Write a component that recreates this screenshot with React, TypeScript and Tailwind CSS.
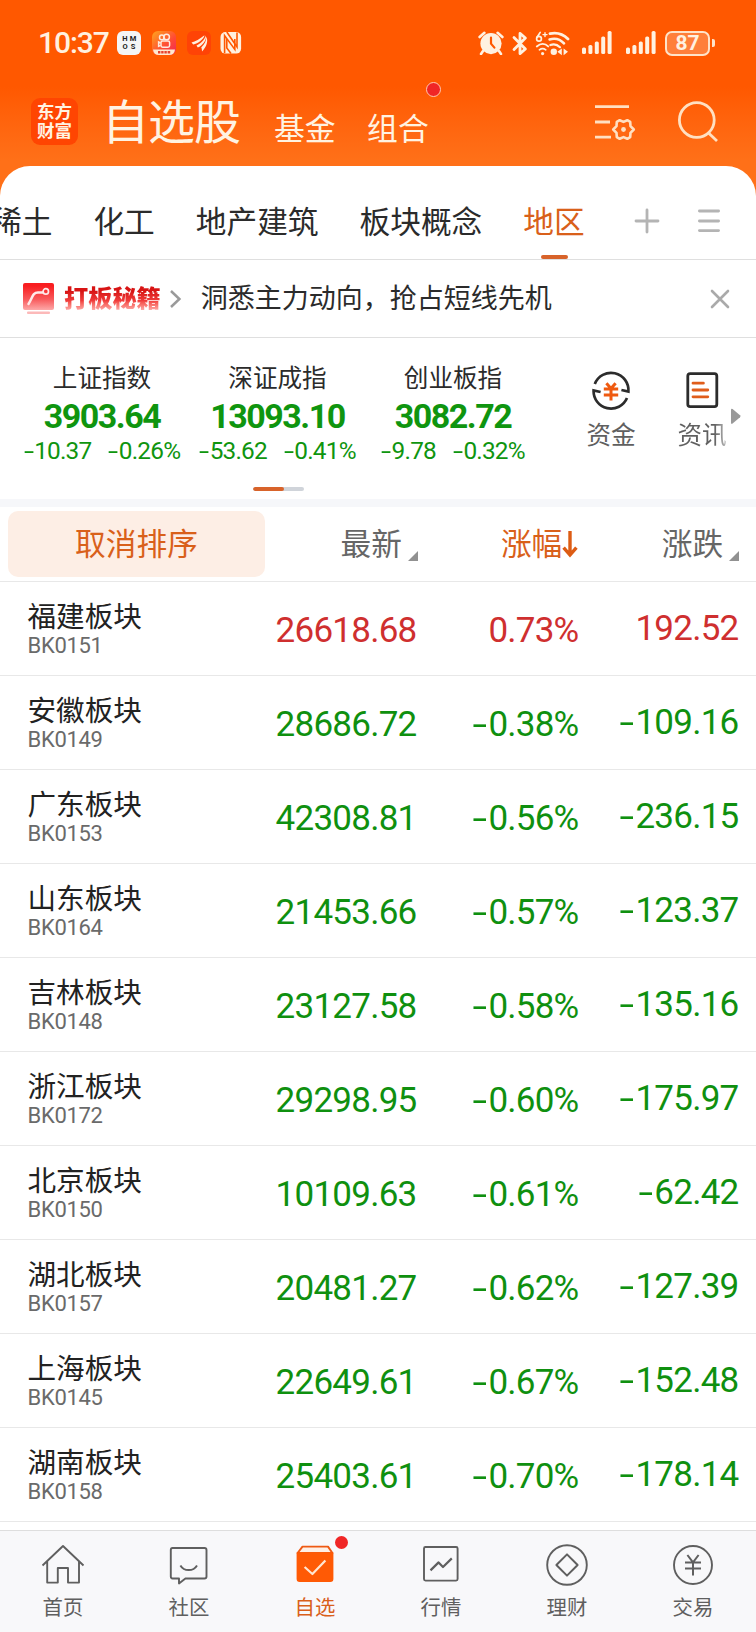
import React from "react";

type Quote = { name: string; code: string; price: string; pct: string; diff: string };

const quotes: Quote[] = [
  { name: "福建板块", code: "BK0151", price: "26618.68", pct: "0.73%", diff: "192.52" },
  { name: "安徽板块", code: "BK0149", price: "28686.72", pct: "-0.38%", diff: "-109.16" },
  { name: "广东板块", code: "BK0153", price: "42308.81", pct: "-0.56%", diff: "-236.15" },
  { name: "山东板块", code: "BK0164", price: "21453.66", pct: "-0.57%", diff: "-123.37" },
  { name: "吉林板块", code: "BK0148", price: "23127.58", pct: "-0.58%", diff: "-135.16" },
  { name: "浙江板块", code: "BK0172", price: "29298.95", pct: "-0.60%", diff: "-175.97" },
  { name: "北京板块", code: "BK0150", price: "10109.63", pct: "-0.61%", diff: "-62.42" },
  { name: "湖北板块", code: "BK0157", price: "20481.27", pct: "-0.62%", diff: "-127.39" },
  { name: "上海板块", code: "BK0145", price: "22649.61", pct: "-0.67%", diff: "-152.48" },
  { name: "湖南板块", code: "BK0158", price: "25403.61", pct: "-0.70%", diff: "-178.14" },
];

const indices = [
  { name: "上证指数", value: "3903.64", diff: "-10.37", pct: "-0.26%", box: "w-[176px]" },
  { name: "深证成指", value: "13093.10", diff: "-53.62", pct: "-0.41%", box: "w-[175px]" },
  { name: "创业板指", value: "3082.72", diff: "-9.78", pct: "-0.32%", box: "w-[176px]" },
];

function Signed({ text }: { text: string }) {
  if (!text.startsWith("-")) return <>{text}</>;
  return (
    <>
      <span className="mr-[0.06em] inline-block origin-right scale-x-[1.5]">-</span>
      {text.slice(1)}
    </>
  );
}

function SignalBars() {
  return (
    <svg width="30" height="24" viewBox="0 0 30 24" fill="#fff1e0">
      <rect x="0" y="16.5" width="4" height="6.5" rx="1.6" />
      <rect x="6.4" y="14" width="4" height="9" rx="1.6" />
      <rect x="12.8" y="10.5" width="4" height="12.5" rx="1.6" />
      <rect x="19.2" y="5.5" width="4" height="17.5" rx="1.6" />
      <rect x="25.6" y="0" width="4" height="23" rx="1.6" />
    </svg>
  );
}

function StatusBar() {
  return (
    <div className="flex h-[86px] items-center pl-[38px] text-[#fff1e0]">
      <span className="w-[79px] text-[30px] font-medium leading-[30px] tracking-[-1.1px]">10:37</span>
      <div className="grid h-6 w-6 grid-cols-2 place-items-center rounded-[6px] bg-[#f4f5f6] px-[4px] py-[4px] text-[7.5px] font-bold leading-[8px] text-[#222]">
        <span>H</span>
        <span>M</span>
        <span>O</span>
        <span>S</span>
      </div>
      <svg className="ml-[11px]" width="24" height="24" viewBox="0 0 24 24">
        <defs>
          <linearGradient id="video" x1="0" y1="0" x2="1" y2="1">
            <stop offset="0" stopColor="#ffa51e" />
            <stop offset="0.6" stopColor="#ff4a35" />
            <stop offset="1" stopColor="#f0255a" />
          </linearGradient>
        </defs>
        <rect width="24" height="24" rx="6" fill="url(#video)" />
        <g fill="none" stroke="#ffe9dd" strokeWidth="1.5">
          <circle cx="9.8" cy="6.4" r="2.3" />
          <circle cx="14.6" cy="6" r="2.8" />
          <rect x="9" y="10" width="8.6" height="6.2" rx="1.6" />
          <path d="M8.6 12 L6.6 11 v4.4 L8.6 14.4" />
        </g>
        <path d="M1 18.5 H23 Q22.4 24 17 24 H7 Q1.6 24 1 18.5Z" fill="#ffe8cf" />
        <path d="M6 21.2 H19" stroke="#e8402c" strokeWidth="2.6" strokeDasharray="2.4 0.8" />
      </svg>
      <svg className="ml-[11px]" width="24" height="24" viewBox="0 0 24 24">
        <rect width="24" height="24" rx="6" fill="#ff4306" />
        <g fill="#fff1e0">
          <path d="M4.5 11.5 C8 10.5 13 8 17.5 4.2 C17 8 11 12.5 6.2 13.6 Z" />
          <path d="M9.5 14.4 C13.5 13 17.5 9 18.8 4.6 C20 9 15.5 14.8 10.8 16.6 Z" />
          <path d="M14.2 16.6 C17.6 13.5 19.4 9.5 19.4 5.8 C21.4 10 19.6 16 15 20.4 C15 18.8 14.8 17.6 14.2 16.6Z" />
        </g>
      </svg>
      <svg className="ml-[9px]" width="22" height="24" viewBox="0 0 22 24">
        <rect x="0.5" y="1" width="20.6" height="21.6" rx="5" fill="#fff1e0" />
        <path d="M4.6 22 V4.6 L14.8 18.4 V8" fill="none" stroke="#ff5800" strokeWidth="1.6" />
        <path d="M6.8 1 L17 16 V1.6 M6.8 8 V17 L11 22.6" fill="none" stroke="#ff5800" strokeWidth="1.6" />
      </svg>
      <svg className="ml-[235.5px]" width="26" height="24" viewBox="0 0 26 24">
        <circle cx="13" cy="12.6" r="10.6" fill="#fff1e0" />
        <path d="M1.6 6 L6.4 1.8 M24.4 6 L19.6 1.8 M5 20 L3 23 M21 20 L23 23" stroke="#fff1e0" strokeWidth="2.6" strokeLinecap="round" />
        <path d="M13 6.6 V12.6 L16.4 16.6" fill="none" stroke="#ff5800" strokeWidth="2.2" strokeLinecap="round" />
      </svg>
      <svg className="ml-[8px]" width="16" height="25" viewBox="0 0 16 25">
        <path d="M2 6.5 L13.4 18 L8 22.6 V2.4 L13.4 7 L2 18.5" fill="none" stroke="#fff1e0" strokeWidth="2.8" strokeLinejoin="round" strokeLinecap="round" />
      </svg>
      <svg className="ml-[7px]" width="36" height="25" viewBox="0 0 36 25">
        <g fill="none" stroke="#fff1e0" strokeLinecap="round">
          <path d="M5.2 1.4 L2.2 6" strokeWidth="1.7" />
          <circle cx="4" cy="7.8" r="2.4" strokeWidth="1.7" />
          <path d="M8 3.6 H12 M10 1.6 V5.6" strokeWidth="1.4" />
          <path d="M15 2.6 C22 1 28 3 33 8" strokeWidth="2.8" />
          <path d="M14.6 8.4 C20 6.8 25.4 8.4 29 12.4" strokeWidth="2.6" />
          <path d="M1.8 15.4 C5.6 12.2 10 12.2 13.2 15.4" strokeWidth="1.9" />
          <path d="M4.4 18.8 C6.4 17.2 8.8 17.2 10.8 18.8" strokeWidth="1.7" />
          <path d="M15.4 14 C19 12.6 22.4 13.6 25 16.2" strokeWidth="2.2" />
        </g>
        <circle cx="7.6" cy="22.6" r="1.6" fill="#fff1e0" />
        <circle cx="18.8" cy="20.8" r="3.2" fill="#fff1e0" />
        <path d="M22.4 20.8 L26.8 17.4 V24.2Z M33 20.8 L28.6 17.4 V24.2Z" fill="#fff1e0" />
      </svg>
      <div className="ml-[11px] flex gap-[14px]">
        <SignalBars />
        <SignalBars />
      </div>
      <div className="ml-[9.5px] flex items-center gap-[2px]">
        <div className="flex h-[25px] w-[45px] items-center justify-center rounded-[7px] border-2 border-[#ffe3c8] bg-[#ff7f3a] text-[21px] font-bold leading-[21px]">
          87
        </div>
        <div className="h-2 w-[3px] rounded-r-[2px] bg-[#ffe3c8]" />
      </div>
    </div>
  );
}

function TitleBar() {
  return (
    <div className="flex h-20 items-start pl-[31px] text-[#fff3e2]">
      <div className="mt-3 flex h-[47px] w-[47px] flex-col items-center justify-center rounded-[9px] bg-[#ff4502] text-[17.5px] font-bold leading-[19px]">
        <span>东方</span>
        <span>财富</span>
      </div>
      <span className="ml-[24px] mt-[12px] w-[140px] text-[47px] leading-[50px] tracking-[-1px]">自选股</span>
      <span className="ml-[32px] mt-[24px] text-[30.8px] leading-[40px]">基金</span>
      <span className="relative ml-[31.5px] mt-[24px] text-[30.8px] leading-[40px]">
        组合
        <i className="absolute -right-[12px] -top-[28px] h-[15px] w-[15px] rounded-full border border-[#ffc9b4] bg-[#f02626]" />
      </span>
      <svg className="ml-[165px] mt-[18px]" width="42" height="38" viewBox="0 0 42 38" fill="none" stroke="#ffe0c2">
        <path d="M1 2.7 H35 M1 18 H16 M1 33.2 H17" strokeWidth="2.8" />
        <path
          d="M25.7 16.2 L29.5 17.9 L33.3 16.2 L36.2 17.9 L36.5 22.1 L39.8 25.5 L36.5 28.9 L36.2 33.1 L33.3 34.8 L29.5 33.1 L25.7 34.8 L22.8 33.1 L22.5 28.9 L19.2 25.5 L22.5 22.1 L22.8 17.9 Z"
          strokeWidth="2.6"
          strokeLinejoin="round"
        />
        <circle cx="29.5" cy="25.5" r="2.4" fill="#ffe0c2" stroke="none" />
      </svg>
      <svg className="ml-[42px] mt-[15px]" width="42" height="42" viewBox="0 0 42 42" fill="none" stroke="#ffe0c2" strokeWidth="2.8">
        <circle cx="18.8" cy="19" r="17.4" />
        <path d="M30 31.5 L39 40" />
      </svg>
    </div>
  );
}

function Tabs() {
  return (
    <div className="flex h-[94px] items-start border-b border-[#dfdfdf] pt-[36.5px] text-[30.7px] leading-[40px] text-[#2b2b2b]">
      <div className="-ml-[9px] flex shrink-0 gap-[41px] whitespace-nowrap">
        <span>稀土</span>
        <span>化工</span>
        <span>地产建筑</span>
        <span>板块概念</span>
        <div className="flex h-[56.5px] flex-col items-center justify-between text-[#d9601a]">
          <span>地区</span>
          <i className="h-1 w-[27px] rounded-full bg-[#d8632a]" />
        </div>
      </div>
      <svg className="ml-[49px] mt-[5.5px]" width="26" height="26" viewBox="0 0 26 26" stroke="#b4b4b4" strokeWidth="2.8" strokeLinecap="round">
        <path d="M2 13 H24 M13 2 V24" />
      </svg>
      <svg className="ml-[37px] mt-[5.5px]" width="24" height="26" viewBox="0 0 24 26" stroke="#b4b4b4" strokeWidth="2.8" strokeLinecap="round">
        <path d="M2.4 3 H21.6 M2.4 13 H21.6 M2.4 22.6 H21.6" />
      </svg>
    </div>
  );
}

function Promo() {
  return (
    <div className="flex h-[78px] items-center border-b border-[#dfdfdf] pl-[22px]">
      <svg width="33" height="34" viewBox="0 0 33 34">
        <defs>
          <linearGradient id="promo" x1="0" y1="0" x2="0" y2="1">
            <stop offset="0.1" stopColor="#f91d20" />
            <stop offset="0.6" stopColor="#f8595b" />
            <stop offset="1" stopColor="#fda9a9" />
          </linearGradient>
        </defs>
        <rect x="1" y="1" width="31" height="27" rx="2" fill="url(#promo)" />
        <rect x="5" y="29.5" width="23" height="2.6" rx="1" fill="#fcb9b9" />
        <path d="M6.5 22 C10.5 16 10.5 10.4 16 10.4 H21" fill="none" stroke="#ffe9e9" strokeWidth="2.5" strokeLinecap="round" />
        <circle cx="23.8" cy="9.4" r="2.7" fill="none" stroke="#ffe9e9" strokeWidth="1.7" />
      </svg>
      <span className="ml-[9px] bg-linear-to-b from-[#d81414] from-25% via-[#f03a3a] via-55% to-[#fdb0b0] to-90% bg-clip-text text-[24.2px] font-black leading-[30px] text-transparent">
        打板秘籍
      </span>
      <svg className="ml-[8px]" width="14" height="20" viewBox="0 0 14 20" fill="none" stroke="#9a9a9a" strokeWidth="2.5">
        <path d="M2 2 L10.4 10 L2 18" />
      </svg>
      <span className="ml-[18px] w-[510px] text-[27px] leading-[36px] text-[#2b2b2b]">洞悉主力动向，抢占短线先机</span>
      <svg className="-ml-[1px]" width="20" height="20" viewBox="0 0 20 20" stroke="#aaa" strokeWidth="2.6" strokeLinecap="round">
        <path d="M2 2 L18 18 M18 2 L2 18" />
      </svg>
    </div>
  );
}

function Indices() {
  return (
    <div className="flex h-[161px] pl-[14px] text-[#0f950f]">
      <div className="w-[527px]">
        <div className="flex h-[149px]">
          {indices.map((i) => (
            <div key={i.name} className={`flex flex-col items-center pt-[24px] ${i.box}`}>
              <span className="text-[24.6px] leading-[34px] text-[#2b2b2b]">{i.name}</span>
              <span className="mt-[2px] text-[34px] font-bold leading-[36px] tracking-[-1.5px]">{i.value}</span>
              <span className="ml-[3px] mt-[3px] flex gap-[20px] whitespace-nowrap text-[24.4px] leading-[28px] tracking-[-0.8px]">
                <span>
                  <Signed text={i.diff} />
                </span>
                <span>
                  <Signed text={i.pct} />
                </span>
              </span>
            </div>
          ))}
        </div>
        <div className="ml-[239px] h-1 w-[51px] overflow-hidden rounded-full bg-[#d0d4da]">
          <div className="h-1 w-[31px] rounded-full bg-[#d8632a]" />
        </div>
      </div>
      <div className="flex pt-[32px] text-[24.6px] leading-[30px] text-[#606060]">
        <div className="ml-[39px] flex w-[62px] flex-col items-center">
          <svg width="40" height="40" viewBox="0 0 40 40" fill="none" stroke="#2c2c2c" strokeWidth="2.7">
            <path d="M3.8 14 A17.4 17.4 0 0 1 37.4 21.6 L30.4 20" />
            <path d="M36 28 A17.4 17.4 0 0 1 2.6 20.4 L9.6 22" />
            <path d="M15.4 13.2 L20 18.4 L24.6 13.2 M12.8 19 H27.2 M12.8 25 H27.2 M20 18 V30.4" stroke="#ef5a10" strokeWidth="3" />
          </svg>
          <span className="mt-[11px]">资金</span>
        </div>
        <div className="ml-[29px] flex w-[62px] flex-col items-center">
          <svg width="40" height="40" viewBox="0 0 40 40" fill="none" stroke="#2c2c2c" strokeWidth="2.8">
            <rect x="5.8" y="3.6" width="29" height="33" rx="2.4" />
            <path d="M11 13.2 H21.4 M11 20 H25.8 M11 26.8 H25.8" stroke="#e05d1b" strokeWidth="2.8" strokeLinecap="round" />
          </svg>
          <span className="mt-[11px] bg-linear-to-r from-[#606060] from-75% to-[#c4c4c4] bg-clip-text text-transparent">资讯</span>
        </div>
        <svg className="-ml-[2px] mt-[38px]" width="10" height="17" viewBox="0 0 10 17" fill="#999">
          <path d="M0 2 Q0 0 1.6 1 L9 7.2 Q10 8.2 9 9.2 L1.6 15.6 Q0 16.6 0 14.6 Z" />
        </svg>
      </div>
    </div>
  );
}

function Corner() {
  return (
    <svg className="mb-[4px] ml-[6px]" width="10" height="10" viewBox="0 0 10 10" fill="#919191">
      <path d="M10 0 V10 H0 Z" />
    </svg>
  );
}

function TableHead() {
  return (
    <div className="flex h-[75px] items-start border-b border-[#e8e8e8] pl-2 pt-1 text-[30.7px] leading-[40px] text-[#666]">
      <div className="flex h-[66px] w-[257px] items-start justify-center rounded-[10px] bg-[#fdeee5] pt-[13.5px] text-[#d9601a]">取消排序</div>
      <div className="ml-[75.5px] mt-[13.5px] flex items-end">
        最新
        <Corner />
      </div>
      <div className="ml-[83px] mt-[13.5px] flex items-start text-[#d9601a]">
        涨幅
        <svg className="mt-[5px]" width="16" height="28" viewBox="0 0 16 28" fill="none" stroke="#dd5c14" strokeWidth="3.4">
          <path d="M8 1 V25 M1.6 17.6 L8 25 L14.4 17.6" />
        </svg>
      </div>
      <div className="ml-[83.5px] mt-[13.5px] flex items-end">
        涨跌
        <Corner />
      </div>
    </div>
  );
}

function Row({ q }: { q: Quote }) {
  const color = q.diff.startsWith("-") ? "text-[#0f900f]" : "text-[#cf2f2f]";
  return (
    <div className="flex h-[94px] items-start border-b border-[#e8e8e8] pl-[27.5px]">
      <div className="flex w-[180px] flex-col pt-[18px]">
        <span className="text-[28.6px] leading-[34px] text-[#222]">{q.name}</span>
        <span className="text-[22px] leading-[24px] tracking-[-0.3px] text-[#6a6a6a]">{q.code}</span>
      </div>
      <div className={`flex pt-[29px] text-right text-[35px] leading-[40px] tracking-[-0.75px] ${color}`}>
        <span className="w-[209px]">
          <Signed text={q.price} />
        </span>
        <span className="w-[162px]">
          <Signed text={q.pct} />
        </span>
        <span className="-mt-[2px] w-[160px]">
          <Signed text={q.diff} />
        </span>
      </div>
    </div>
  );
}

const navItems = [
  {
    label: "首页",
    icon: <path d="M1.5 22.5 L22 3 L42.5 22.5 M6.2 18.5 V39.6 H16.8 V25 H27 V39.6 H38 V18.5" />,
  },
  {
    label: "社区",
    icon: (
      <>
        <path d="M5.5 5 H37.5 Q39.5 5 39.5 7 V33.5 Q39.5 35.5 37.5 35.5 H18.4 L12 40.4 V35.5 H5.5 Q3.8 35.5 3.8 33.5 V7 Q3.8 5 5.5 5Z" />
        <path d="M13.4 22.4 C17 28.6 26.4 28.6 30 22.4" />
      </>
    ),
  },
  {
    label: "自选",
    active: true,
    icon: (
      <>
        <path d="M9.5 3.6 H35 L39.4 10 H4.6 Z" fill="#fff0e6" stroke="#ee5a14" />
        <path d="M3.6 9.6 H40.4 V36 Q40.4 39 37.4 39 H6.6 Q3.6 39 3.6 36Z" fill="#ff5a05" stroke="none" />
        <path d="M11.6 24 L19.4 31 L32.4 17.4" stroke="#ffe6d2" strokeWidth="2.2" />
      </>
    ),
  },
  {
    label: "行情",
    icon: (
      <>
        <rect x="5" y="4" width="33.6" height="33.6" rx="1.5" />
        <path d="M11.5 27.4 L19.6 19.4 L24 24 L32.8 15.4" strokeWidth="2.2" />
      </>
    ),
  },
  {
    label: "理财",
    icon: (
      <>
        <circle cx="22" cy="22" r="19.8" />
        <path d="M22 11.4 L32.6 22 L22 32.6 L11.4 22Z" strokeWidth="2" />
      </>
    ),
  },
  {
    label: "交易",
    icon: (
      <>
        <circle cx="22" cy="22" r="19" />
        <path d="M16.4 12 L22 19.4 L27.6 12 M14 19.6 H30 M14 25.4 H30 M22 19.4 V32.4" strokeWidth="2" />
      </>
    ),
  },
];

function BottomNav() {
  return (
    <nav className="flex h-[102px] border-t border-[#dedede] bg-[#f8f8fa] text-[#5f5f5f]">
      {navItems.map((n) => (
        <div
          key={n.label}
          className={`relative flex flex-1 flex-col items-center pt-[12px] text-[20.4px] leading-[26px] ${n.active ? "text-[#d9601a]" : ""}`}
        >
          <svg className="-ml-px" width="44" height="44" viewBox="0 0 44 44" fill="none" stroke="currentColor" strokeWidth="1.9" strokeLinejoin="round">
            {n.icon}
          </svg>
          <span className="mt-[7.5px]">{n.label}</span>
          {n.active && <i className="absolute right-[30.5px] top-[4.5px] h-[13px] w-[13px] rounded-full bg-[#f02626]" />}
        </div>
      ))}
    </nav>
  );
}

export default function App() {
  return (
    <div className="flex h-[1632px] w-[756px] flex-col overflow-hidden bg-[#ff7018] font-['Roboto','Noto_Sans_CJK_SC',sans-serif]">
      <header className="h-[206px] shrink-0 bg-linear-to-b from-[#ff5800] from-[42%] to-[#ff7018] to-[78%]">
        <StatusBar />
        <TitleBar />
      </header>
      <main className="z-10 -mt-[40px] flex-1 rounded-t-[30px] bg-white">
        <Tabs />
        <Promo />
        <Indices />
        <div className="h-2 bg-[#f6f7fa]" />
        <TableHead />
        {quotes.map((q) => (
          <Row key={q.code} q={q} />
        ))}
      </main>
      <BottomNav />
    </div>
  );
}
